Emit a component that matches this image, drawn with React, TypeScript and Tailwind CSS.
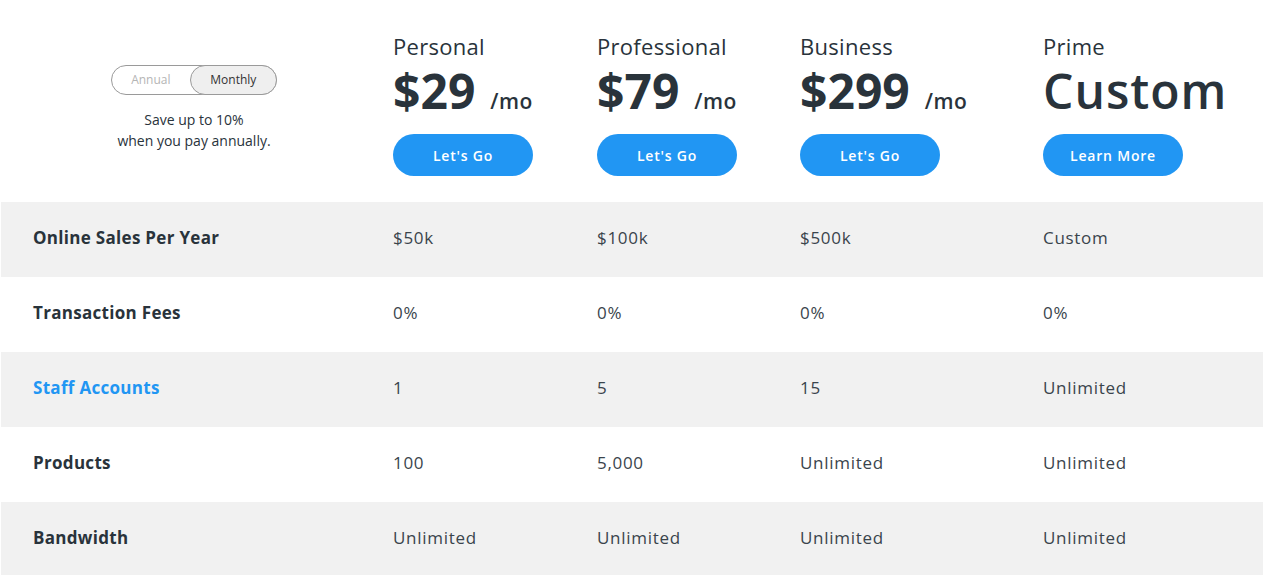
import React from "react";

const plans = [
  { name: "Personal", price: "$29", cta: "Let's Go" },
  { name: "Professional", price: "$79", cta: "Let's Go" },
  { name: "Business", price: "$299", cta: "Let's Go" },
  { name: "Prime", price: "Custom", cta: "Learn More" },
];

const rows: { label: string; values: string[]; link?: boolean }[] = [
  { label: "Online Sales Per Year", values: ["$50k", "$100k", "$500k", "Custom"] },
  { label: "Transaction Fees", values: ["0%", "0%", "0%", "0%"] },
  { label: "Staff Accounts", values: ["1", "5", "15", "Unlimited"], link: true },
  { label: "Products", values: ["100", "5,000", "Unlimited", "Unlimited"] },
  { label: "Bandwidth", values: ["Unlimited", "Unlimited", "Unlimited", "Unlimited"] },
];

export default function App() {
  return (
    <div
      className="w-[1263px] h-[575px] overflow-hidden bg-white text-[#29333b]"
      style={{ fontFamily: "'Open Sans', 'Noto Sans', sans-serif" }}
    >
      <div className="grid grid-cols-[393px_204px_203px_243px_1fr] h-[202px]">
        <div className="flex flex-col items-center pt-[65px] pr-[5px]">
          <div className="flex w-[166px] h-[30px] rounded-full border border-[#9a9a9a] text-[12px]">
            <div className="flex-1 flex items-center justify-center text-[#b5b5b5]">Annual</div>
            <div className="flex-[1.1] flex items-center justify-center rounded-full bg-[#efefef] -my-px -mr-px border border-[#9a9a9a] text-[#333]">
              Monthly
            </div>
          </div>
          <div className="mt-[14px] text-[14px] leading-[21px] text-center">
            Save up to 10%
            <br />
            when you pay annually.
          </div>
        </div>
        {plans.map((p) => (
          <div key={p.name} className="pt-[34px]">
            <div className="text-[22px] leading-[24px] font-medium tracking-[0.3px]">{p.name}</div>
            {p.price === "Custom" ? (
              <div className="mt-[8px] text-[48px] leading-[50px] font-semibold tracking-[1px]">Custom</div>
            ) : (
              <div className="mt-[8px] flex items-baseline">
                <span className="text-[48px] leading-[50px] font-bold">{p.price}</span>
                <span className="text-[21px] leading-[24px] font-semibold ml-[15px] tracking-[0.5px]">/mo</span>
              </div>
            )}
            <button className="mt-[18px] w-[140px] h-[42px] rounded-full bg-[#2196f3] text-white text-[14px] font-semibold tracking-[0.8px]">
              {p.cta}
            </button>
          </div>
        ))}
      </div>
      <div>
        {rows.map((r, i) => (
          <div
            key={r.label}
            className={`grid grid-cols-[392px_204px_203px_243px_1fr] h-[75px] items-center pb-[3px] ml-px ${
              i % 2 === 0 ? "bg-[#f1f1f1]" : "bg-white"
            }`}
          >
            <div
              className={`pl-[32px] text-[17px] font-bold tracking-[0.3px] ${
                r.link ? "text-[#2196f3]" : "text-[#29333b]"
              }`}
            >
              {r.label}
            </div>
            {r.values.map((v, j) => (
              <div key={j} className="text-[17px] tracking-[0.7px] text-[#3a444c]">
                {v}
              </div>
            ))}
          </div>
        ))}
      </div>
    </div>
  );
}
